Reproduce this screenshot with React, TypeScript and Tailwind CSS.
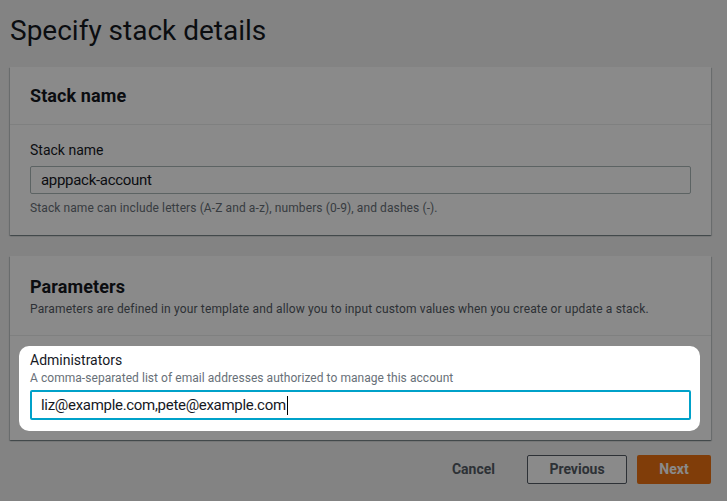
export default function App() {
  return (
    <div className="min-h-[501px] bg-[#f2f3f3] font-['Roboto',sans-serif] text-[#16191f] pt-[13px] pb-[16px]">
      <h1 className="pl-[10px] text-[28px] leading-[36px] font-normal">Specify stack details</h1>

      {/* Stack name */}
      <section className="ml-[10px] mt-[18px] w-[701px] bg-white shadow-[0_1px_1px_0_rgba(0,28,36,0.3),1px_1px_1px_0_rgba(0,28,36,0.15),-1px_1px_1px_0_rgba(0,28,36,0.15)]">
        <div className="h-[58px] flex items-center px-[20px] border-b border-[#eaeded]">
          <h2 className="text-[18px] font-bold leading-[24px] tracking-[0.1px]">Stack name</h2>
        </div>
        <div className="px-[20px] pt-[14px] pb-[19px]">
          <div className="text-[14px] leading-[22px]">Stack name</div>
          <div className="mt-[5px] h-[28px] flex items-center px-[10px] border border-[#aab7b8] rounded-[2px] text-[15px] tracking-[-0.3px]">
            apppack-account
          </div>
          <div className="mt-[6px] text-[12px] leading-[16px] tracking-[0.1px] text-[#687078]">
            Stack name can include letters (A-Z and a-z), numbers (0-9), and dashes (-).
          </div>
        </div>
      </section>

      {/* Parameters */}
      <section className="ml-[10px] mt-[21px] w-[701px] bg-white shadow-[0_1px_1px_0_rgba(0,28,36,0.3),1px_1px_1px_0_rgba(0,28,36,0.15),-1px_1px_1px_0_rgba(0,28,36,0.15)]">
        <div className="px-[20px] pt-[19px] pb-[18px] border-b border-[#eaeded]">
          <h2 className="text-[18px] font-bold leading-[24px] tracking-[0.1px]">Parameters</h2>
          <p className="mt-[2px] text-[12px] leading-[16px] tracking-[0.15px] text-[#545b64]">
            Parameters are defined in your template and allow you to input custom values when you create or update a stack.
          </p>
        </div>
        <div className="pl-[9px] pr-[11px] pt-[10px] pb-[9px]">
          <div className="relative z-10 rounded-[10px] bg-white pl-[11px] pr-[9px] pt-[4px] pb-[11px] shadow-[0_0_0_3000px_rgba(0,0,0,0.46)]">
            <div className="text-[14px] leading-[20px]">Administrators</div>
            <div className="text-[12px] leading-[16px] tracking-[0.05px] text-[#687078]">
              A comma-separated list of email addresses authorized to manage this account
            </div>
            <div className="mt-[4px] h-[30px] flex items-center px-[9px] border-2 border-[#00a1c9] rounded-[2px] text-[15px] tracking-[-0.3px]">
              <span>liz@example.com,pete@example.com</span>
              <span className="ml-[1px] inline-block w-[1px] h-[19px] bg-black" />
            </div>
          </div>
        </div>
      </section>

      {/* Actions */}
      <div className="mt-[15px] mr-[16px] flex justify-end items-center gap-[10px]">
        <button className="h-[29px] px-[22px] text-[14px] font-bold text-[#545b64]">Cancel</button>
        <button className="h-[29px] w-[100px] border border-[#545b64] rounded-[2px] bg-white text-[14px] font-bold text-[#545b64]">
          Previous
        </button>
        <button className="h-[29px] w-[74px] rounded-[2px] bg-[#ec7211] text-[14px] font-bold text-white">Next</button>
      </div>
    </div>
  )
}
